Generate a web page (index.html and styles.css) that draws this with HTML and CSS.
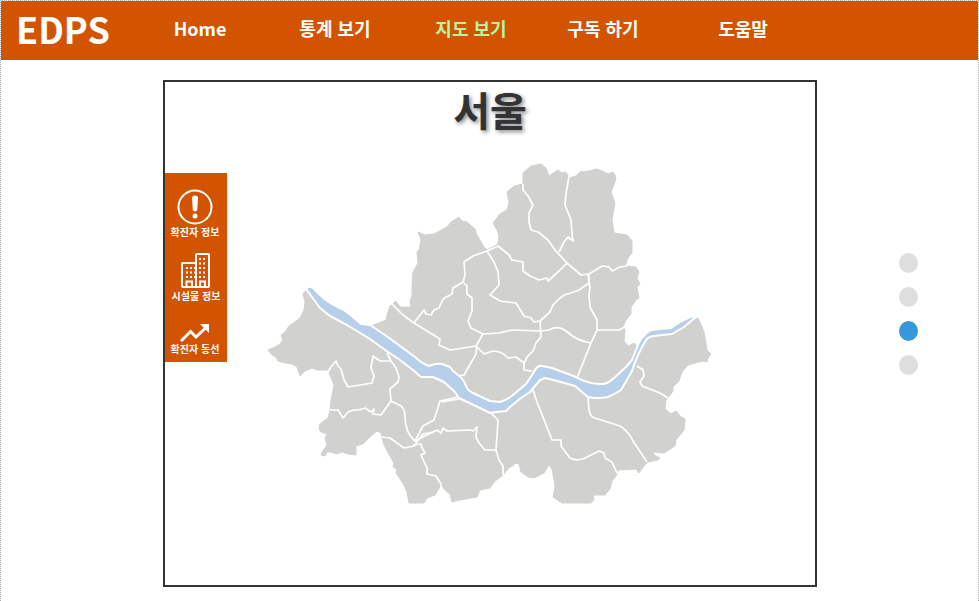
FILE: index.html
```html
<!DOCTYPE html>
<html lang="ko">
<head>
<meta charset="utf-8">
<title>EDPS</title>
<link rel="stylesheet" href="styles.css">
</head>
<body>
<header class="topbar">
  <a class="brand" href="#">EDPS</a>
  <nav class="menu">
    <a href="#">Home</a>
    <a href="#">통계 보기</a>
    <a class="active" href="#">지도 보기</a>
    <a href="#">구독 하기</a>
    <a href="#">도움말</a>
  </nav>
</header>
<main class="page">
  <section class="frame">
    <h1 class="title">서울</h1>
    <div class="content">
      <div class="tools">
        <button class="tool" type="button">
          <svg width="36" height="36" viewBox="0 0 36 36" fill="none" stroke="#fff">
            <circle cx="18" cy="18" r="16.5" stroke-width="2"/>
            <path d="M15 9Q15 6.500 18 6.500T21 9L20.300 20.500Q20 22.500 18 22.500T15.700 20.500Z" fill="#fff" stroke="none"/>
            <circle cx="18" cy="27" r="2.500" fill="#fff" stroke="none"/>
          </svg>
          <span>확진자 정보</span>
        </button>
        <button class="tool tool-building" type="button">
          <svg width="30" height="36" viewBox="0 0 30 36" fill="none" stroke="#fff" stroke-width="2">
            <path d="M15 34H2Q1 34 1 33V11Q1 10 2 10H15M15 34V2Q15 1 16 1H27Q28 1 28 2V33Q28 34 27 34Z"/>
            <path d="M5.500 34V28.500H11V34M19 34V28.500H24V34"/>
            <path d="M5 15H14M5 19.500H14M5 24H14" stroke-dasharray="2 2"/>
            <path d="M18 6H26M18 10.500H26M18 15H26M18 19.500H26M18 24H26" stroke-dasharray="2 2"/>
          </svg>
          <span>시설물 정보</span>
        </button>
        <button class="tool tool-route" type="button">
          <svg width="30" height="18" viewBox="0 0 30 18" fill="none" stroke="#fff">
            <path d="M1 17L10.500 7.500L16 13L26 3.500" stroke-width="3"/>
            <path d="M20 0H29V9Z" fill="#fff" stroke="none"/>
          </svg>
          <span>확진자 동선</span>
        </button>
      </div>
      <svg class="map" viewBox="227 143 588 442" role="img" aria-label="서울">
        <path class="land" d="M306 290L303 294L305 302L304 310L300 318L296 321L289 326L285 332L281 335L283 340L280 344L275 347L268 350L271 354L276 357L278 361L285 363L292 364L297 367L300 376L305 371L312 368L317 370L328 370L330 375L334 385L331 400L330 410L328 418L320 424L319 429L321 432L327 434L325 438L327 445L322 452L321 455L325 456L327 452L331 452L337 454L342 452L348 454L356 455L356 446L363 444L371 436L377 431L381 433L384 445L391 458L394 463L393 467L397 469L396 473L404 485L407 492L409 503L424 503L427 498L435 495L441 485L446 491L450 494L452 502L460 500L477 497L480 490L490 488L494 482L503 475L509 468L514 465L514 463L519 464L521 472L528 477L534 478L544 473L549 465L552 469L554 480L555 487L553 497L562 503L591 503L594 500L593 495L605 495L610 489L612 481L616 476L618 470L636 469L639 473L644 466L648 462L658 460L660 458L654 455L653 452L664 453L675 446L676 440L684 430L685 419L680 416L676 411L671 414L665 409L666 400L668 398L673 391L673 387L679 381L682 372L688 365L703 361L707 362L708 358L711 354L707 350L706 343L704 332L700 322L698 318L693 320L672 331L650 335L637 346L634 343L628 346L624 341L625 330L623 327L626 320L631 314L631 307L636 300L639 298L637 287L640 284L637 278L639 272L636 267L625 266L628 258L632 253L632 241L627 235L614 233L612 220L615 203L611 192L613 187L616 179L615 175L613 172L608 174L602 171L597 169L584 172L581 171L576 176L569 178L566 172L562 173L558 170L549 176L546 168L541 164L531 166L523 173L523 184L514 186L507 192L509 203L507 210L500 214L493 223L497 230L499 236L498 244L487 250L484 247L477 235L475 229L467 222L462 221L459 217L451 222L447 227L434 234L425 235L418 232L421 240L419 250L417 252L418 263L413 272L412 285L412 295L410 302L411 307L400 307L396 301L390 306L388 312L386 320L379 323L371 326L366 333Z"/>
        <path class="river" d="M306 289Q309 285 313 288C317 293 321 296 326 300S337 307 344 310Q352 316 361 324L370 325L385 335L400 346L415 357Q424 365 429 366Q436 363 442 364L450 367L453 371L458 375Q463 378 466 386Q468 391 473 393L490 401L500 402Q507 400 513 395L526 384L534 372Q537 365 542 366L552 368L576 377Q589 385 604 384Q610 382 613 379L626 367L632 360L636 350Q640 336 651 330L671 328L680 322L690 317L697 316L684 327L672 334L653 336Q648 337 646 340Q636 357 632 371L621 390Q615 394 608 397Q597 399 588 397L575 386L561 382L545 378L540 380L530 392L521 398L511 406L506 411L496 412L490 413L480 408L459 398L455 392L444 382L433 377L421 377L413 370L400 360L388 352L370 339L347 325L330 316L320 308Z"/>
        <g class="districts">
          <path d="M328 372L331 367L336 361L338 366L341 369L344 380L348 387L372 383L374 376L371 368L373 356L380 361L391 361L387 353M391 361L396 368L399 377L398 382L390 389L391 401L381 415L373 414L374 409L371 412L365 408L359 410L354 410L348 412L343 418L338 410L330 410M391 401L401 406Q405 410 405 416Q405 433 415 441L423 426L434 420L440 401L458 397M442 402L459 399"/>
          <path d="M382 437L390 438L404 448L414 446L423 434L433 432L437 430L441 433L443 428L447 431L470 430L473 431L477 427L476 437L479 443L485 450L497 450M415 441L433 432M413 445L421 444L422 448L425 453L421 455L427 468L427 474L436 476L441 484L441 492M490 412L498 420L496 450L499 460L503 466L503 475M533 390L537 402L552 440L561 440L561 446L570 458Q576 461 583 459L599 451L604 453L605 458L612 462L617 473M588 397L589 410Q590 418 598 419L620 426Q629 432 633 441L647 462M637 366L643 370L644 376L640 382L642 386L660 393L668 398"/>
          <path d="M391 303L403 315L414 323L432 334L440 339L439 345L450 350L476 346L483 334L471 328L468 321L472 311L472 298L467 294L467 286L463 282L453 288L452 294L443 299L439 308L434 310L431 315L426 314L424 310L414 323M463 282L465 275L464 262L473 256L487 251L498 246"/>
          <path d="M487 251L494 262L498 272L499 285L490 295L500 301L516 303L524 316L531 318L534 322L540 321L541 337L536 343L533 351L527 357L524 363L524 370L532 371M540 321L550 312L553 305L559 299L564 295L571 293L579 290L589 283L589 274M483 334L499 333L512 330L541 331L549 330Q558 325 566 331Q577 341 591 343L597 330L597 320L590 307L589 295L590 288L588 275M597 330L619 330L625 327M591 343L577 378M476 346Q478 353 472 361L464 375L458 376M476 346L484 354L493 351Q502 351 508 358L516 357L524 363"/>
          <path d="M498 246L509 255L512 260L523 262L523 271L530 276L539 280L547 278L548 281L559 271L567 263L555 250L548 240L538 232L531 230L529 222L529 213L533 205L528 196L523 190L523 184M569 176L566 194L565 205L571 220L572 234L573 241L568 237L564 242L559 252M567 263L581 275L589 274L602 266L609 267L612 271L620 267L627 266"/>
        </g>
      </svg>
    </div>
  </section>
  <div class="dots">
    <button type="button" aria-label="1"></button>
    <button type="button" aria-label="2"></button>
    <button type="button" aria-label="3" class="current"></button>
    <button type="button" aria-label="4"></button>
  </div>
</main>
</body>
</html>
```
FILE: styles.css
```css
* {
  box-sizing: border-box;
}

body {
  margin: 0;
  min-height: 100vh;
  border: 1px dotted #aaa;
  border-bottom: 0;
  background: #fff;
  color: #333;
  font-family: "Noto Sans CJK KR", "Noto Sans", sans-serif;
  font-weight: 700;
}

button {
  padding: 0;
  border: 0;
  font: inherit;
  cursor: pointer;
}

.topbar {
  display: flex;
  height: 59px;
  padding-bottom: 6px;
  align-items: center;
  background: #d35400;
}

.brand {
  width: 131px;
  padding-left: 15px;
  color: #fff;
  font-size: 36px;
  line-height: 52px;
  text-decoration: none;
}

.menu {
  display: grid;
  grid-template-columns: 136px 134px 138px 126px 154px;
  text-align: center;
}

.menu a {
  color: #fff;
  font-size: 18px;
  line-height: 28px;
  text-decoration: none;
}

.menu .active {
  color: #b5f5a5;
}

.page {
  display: grid;
  grid-template-columns: 162px minmax(0, 1fr) 161px;
  padding: 20px 0 14px;
}

.frame {
  grid-column: 2;
  border: 2px solid #333;
}

.title {
  margin: 0 0 6px;
  font-size: 40px;
  line-height: 55px;
  text-align: center;
  text-shadow: 2px 2px 4px #888;
}

.content {
  display: grid;
  grid-template-columns: 62px minmax(0, 1fr);
  align-items: start;
}

.tools {
  margin-top: 30px;
  padding: 16px 2px 6px 0;
  background: #d35400;
}

.tool {
  display: flex;
  width: 100%;
  flex-direction: column;
  align-items: center;
  background: none;
  color: #fff;
  font-size: 10px;
  line-height: 14px;
  white-space: nowrap;
}

.tool svg,
.map {
  display: block;
}

.tool-building {
  margin-top: 14px;
  padding-left: 2px;
}

.tool-route {
  margin-top: 21px;
}

.map {
  width: 100%;
  height: auto;
}

.land {
  fill: #d1d2d0;
  stroke: #d1d2d0;
  stroke-linejoin: round;
}

.river {
  fill: #b7cfe9;
  stroke: #fff;
  stroke-width: 2;
  stroke-linejoin: round;
}

.districts {
  fill: none;
  stroke: #fff;
  stroke-width: 1.7;
  stroke-linejoin: round;
}

.dots {
  display: flex;
  flex-direction: column;
  align-items: center;
  gap: 14px;
  padding: 173px 0 0 22px;
}

.dots button {
  width: 19px;
  height: 20px;
  border-radius: 50%;
  background: #dedede;
}

.dots .current {
  background: #3498db;
}
```
